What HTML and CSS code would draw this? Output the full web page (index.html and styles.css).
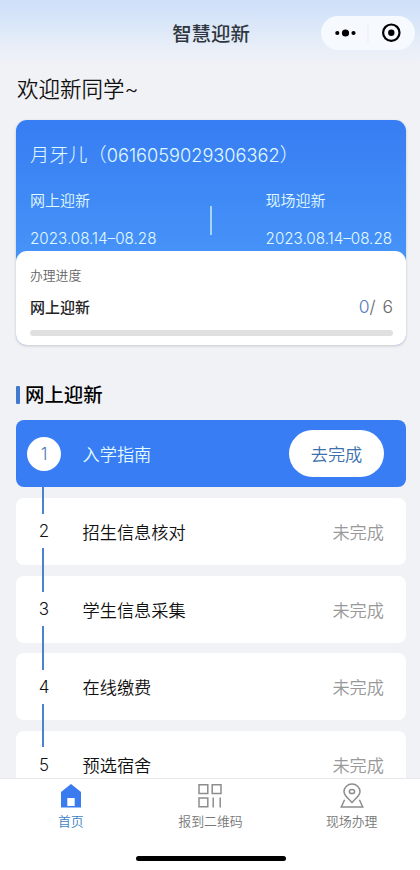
FILE: index.html
```html
<!DOCTYPE html>
<html lang="zh-CN">
<head>
<meta charset="utf-8">
<title>智慧迎新</title>
<link rel="stylesheet" href="styles.css">
</head>
<body>
<div class="app">
  <header class="navbar">
    <h1>智慧迎新</h1>
    <div class="capsule">
      <svg viewBox="0 0 94 34" width="94" height="34">
        <circle cx="16.3" cy="17" r="2.1"/><circle cx="24.5" cy="17" r="3.6"/><circle cx="32.5" cy="17" r="2.1"/>
        <path d="M47 7v20" stroke="#e9eff6" stroke-width="1"/>
        <circle cx="70.3" cy="16.7" r="8.2" fill="none" stroke="#000" stroke-width="2.2"/><circle cx="70.3" cy="16.7" r="3.2"/>
      </svg>
    </div>
  </header>
  <main class="content">
    <p class="welcome">欢迎新同学~</p>
    <section class="card">
      <div class="profile">
        <p class="name">月牙儿（<span class="num">0616059029306362</span>）</p>
        <div class="phases">
          <div class="phase"><span>网上迎新</span><span class="date">2023.08.14–08.28</span></div>
          <i class="divider"></i>
          <div class="phase"><span>现场迎新</span><span class="date">2023.08.14–08.28</span></div>
        </div>
      </div>
      <div class="progress">
        <p class="label">办理进度</p>
        <div class="progress-row"><strong>网上迎新</strong><span class="count"><b>0</b>/ 6</span></div>
        <div class="track"></div>
      </div>
    </section>
    <h2 class="heading">网上迎新</h2>
    <ol class="steps">
      <li class="step active"><span class="no">1</span><span class="title">入学指南</span><button>去完成</button></li>
      <li class="step"><span class="no">2</span><span class="title">招生信息核对</span><span class="state">未完成</span></li>
      <li class="step"><span class="no">3</span><span class="title">学生信息采集</span><span class="state">未完成</span></li>
      <li class="step"><span class="no">4</span><span class="title">在线缴费</span><span class="state">未完成</span></li>
      <li class="step"><span class="no">5</span><span class="title">预选宿舍</span><span class="state">未完成</span></li>
    </ol>
  </main>
  <footer class="tabbar">
    <nav class="tabs">
      <a class="tab current">
        <svg viewBox="0 0 26 26" width="26" height="26"><path d="M13 1 23 9v15.500H3V9Z" fill="#3a7cf0"/><path d="M9.300 15h7.400v8H9.300z" fill="#fff"/></svg>
        <span>首页</span>
      </a>
      <a class="tab">
        <svg viewBox="0 0 26 26" width="26" height="26" fill="none" stroke="#8d8d8d" stroke-width="1.500"><path d="M2 1.700h8.800v8.800H2zM15.200 1.700H24v8.800h-8.800zM2 15h8.800v8.800H2zM16.200 14.500v10M23.200 14.500v10"/></svg>
        <span>报到二维码</span>
      </a>
      <a class="tab">
        <svg viewBox="0 0 26 26" width="26" height="26" fill="none" stroke="#8d8d8d" stroke-width="1.500"><path d="M13 19.500C10 16.200 5 12.500 5 8.700a8 7.800 0 0 1 16 0c0 3.800-5 7.500-8 10.800Z"/><ellipse cx="13" cy="8.500" rx="2.600" ry="2.100"/><path d="M5.600 16.800 2.300 23.900h21.400l-3.300-7.100"/></svg>
        <span>现场办理</span>
      </a>
    </nav>
    <div class="home-indicator"></div>
  </footer>
</div>
</body>
</html>
```
FILE: styles.css
```css
* { box-sizing: border-box; margin: 0; padding: 0; }
body { font-family: Inter, "Noto Sans CJK SC", sans-serif; font-weight: 350; color: #111; background: #f1f2f6; }
.app { height: 870px; display: flex; flex-direction: column; overflow: hidden; background: linear-gradient(#cfdff9 0, #d8e6f8 22px, #e8eef8 46px, #f1f2f6 66px); }
.navbar { flex: none; height: 66px; display: grid; grid-template-columns: 1fr auto 1fr; align-items: center; padding-right: 5px; }
.navbar h1 { grid-column: 2; font-size: 19.4px; line-height: 28px; font-weight: 500; color: #30363f; padding: 1px 0 0 7px; }
.capsule { justify-self: end; width: 94px; height: 34px; border-radius: 17px; background: #f6fafe; }
.capsule svg { display: block; }
.content { flex: 1; min-height: 0; overflow: hidden; padding: 0 14px 0 16px; }
.welcome { font-size: 21.5px; line-height: 32px; margin: 7px 0 15px; padding-left: 1px; }
.card { height: 225px; border-radius: 11px; background: linear-gradient(#377df3, #4693f8 136px); box-shadow: 0 1px 3px rgba(0,0,0,.18); }
.profile { height: 131px; padding: 21px 14px 0; color: #e2fbff; }
.name { font-size: 19.2px; line-height: 28px; font-weight: 300; white-space: nowrap; }
.num { font-size: 18.2px; }
.phases { display: flex; justify-content: space-between; align-items: center; margin-top: 21px; }
.phase { display: flex; flex-direction: column; gap: 16px; font-size: 15px; line-height: 22px; }
.date { font-size: 15.2px; font-weight: 300; }
.divider { width: 1.500px; height: 29px; background: #a6d4fb; }
.progress { height: 94px; border-radius: 11px; background: #fff; padding: 15px 13px 0 14px; }
.label { font-size: 12.8px; line-height: 20px; color: #666; }
.progress-row { display: flex; justify-content: space-between; align-items: center; height: 24px; margin-top: 8px; font-size: 15px; color: #222; }
.progress-row strong { font-weight: 500; }
.count { font-size: 17.5px; word-spacing: 2px; color: #666; }
.count b { font-weight: 350; color: #5478bd; }
.track { height: 6px; margin-top: 12px; border-radius: 3px; background: #e0e0e0; }
.heading { display: flex; align-items: center; gap: 5px; margin: 36px 0 11px; font-size: 19.4px; line-height: 28px; font-weight: 500; color: #000; }
.heading::before { content: ""; width: 4px; height: 18px; border-radius: 1px; background: #4379cf; }
.steps { list-style: none; display: flex; flex-direction: column; gap: 10.800px; }
.step { flex: none; position: relative; height: 67px; border-radius: 8px; background: #fff; display: flex; align-items: center; padding: 0 22px 0 11px; font-size: 17.200px; }
.step:not(:last-child)::after { content: ""; position: absolute; z-index: 1; left: 26px; top: 50.500px; width: 2px; height: 43.500px; background: #4b82cb; }
.step.active::after { top: 67px; height: 27px; }
.no { width: 34px; height: 34px; border-radius: 50%; background: #fff; line-height: 34px; text-align: center; font-size: 17px; }
.title { margin-left: 21.5px; flex: 1; }
.state { color: #999; }
.active { background: #387df3; color: #e2fbff; }
.active .no { color: #4d79b4; font-weight: 300; }
.step button { width: 95px; height: 47px; border: 0; border-radius: 24px; background: #fff; color: #3c71ad; font: inherit; }
.tabbar { flex: none; height: 92px; background: #fff; border-top: 1px solid #e8e8ea; display: flex; flex-direction: column; align-items: center; }
.tabs { width: 100%; display: grid; grid-template-columns: repeat(3, 1fr); padding: 4px 0 0 1px; }
.tab { display: flex; flex-direction: column; align-items: center; gap: 3px; font-size: 12.900px; line-height: 20px; color: #777; }
.tab:last-child { padding-left: 3px; }
.tab svg { display: block; }
.current { color: #3d7fc5; }
.home-indicator { width: 150px; height: 5px; border-radius: 3px; background: #000; margin: 24px 0 0 2px; }
```
